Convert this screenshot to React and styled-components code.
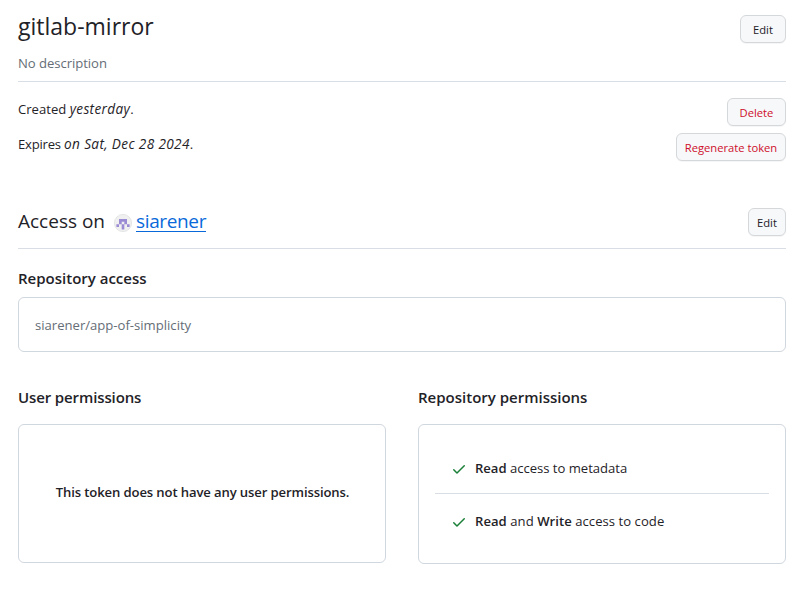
import React from 'react';
import styled, { createGlobalStyle } from 'styled-components';

const Global = createGlobalStyle`
  * { box-sizing: border-box; }
  body {
    margin: 0;
    background: #fff;
    color: #1f2328;
    font: 13.1px/21px "Open Sans", "Noto Sans", sans-serif;
  }
  h1, h2, h3, p, ul { margin: 0; padding: 0; }
`;

const Page = styled.main`
  width: 806px;
  height: 596px;
  padding: 0 20px 0 18px;
  overflow: hidden;
`;

const Header = styled.header`
  display: flex;
  justify-content: space-between;
  align-items: flex-start;
  height: 82px;
  border-bottom: 1px solid #d8dee4;
  padding-top: 8px;
`;

const Title = styled.h1`
  font-size: 23px;
  line-height: 36px;
  font-weight: 400;
`;

const Description = styled.p`
  margin-top: 9px;
  color: #656d76;
  letter-spacing: -0.05px;
`;

const Button = styled.button`
  width: ${(p) => p.$width}px;
  height: 28px;
  padding: 2px 0 0;
  border: 1px solid #d5d8da;
  border-radius: 6px;
  background: #f6f8fa;
  box-shadow: 0 1px 0 rgba(31, 35, 40, 0.04);
  color: ${(p) => (p.$danger ? '#cf0f2b' : '#1c2026')};
  font: 11.2px/20px "Open Sans", sans-serif;
  white-space: nowrap;
`;

const HeaderAction = styled.div`
  padding-top: 7px;
`;

const Details = styled.section`
  display: flex;
  justify-content: space-between;
  height: 126px;
  padding-top: 16px;
`;

const Dates = styled.div`
  display: flex;
  flex-direction: column;
  gap: 14px;
  padding-top: 1px;
`;

const DateLine = styled.p`
  height: 21px;
  letter-spacing: ${(p) => p.$spacing || 0}px;
`;

const When = styled.em`
  font-size: 13.6px;
  line-height: 1;
  letter-spacing: ${(p) => p.$spacing}px;
`;

const Actions = styled.div`
  display: flex;
  flex-direction: column;
  align-items: flex-end;
  gap: 7px;
`;

const AccessHeader = styled.div`
  display: flex;
  justify-content: space-between;
  height: 41px;
  border-bottom: 1px solid #d8dee4;
`;

const AccessTitle = styled.h2`
  display: flex;
  font-size: 19px;
  line-height: 27px;
  font-weight: 400;
`;

const Avatar = styled.svg`
  width: 18px;
  height: 18px;
  margin: 6px 4px 0 9px;
`;

const OwnerLink = styled.a`
  height: 24px;
  color: #0969da;
  letter-spacing: -0.36px;
  text-decoration: none;
  border-bottom: 1px solid #0969da;
`;

const SectionTitle = styled.h3`
  font-size: 15px;
  line-height: 24px;
  font-weight: 600;
  letter-spacing: ${(p) => p.$spacing || 0}px;
`;

const Card = styled.div`
  border: 1px solid #d0d7de;
  border-radius: 6px;
  height: ${(p) => p.$height}px;
`;

const RepositoryCard = styled(Card)`
  display: flex;
  align-items: center;
  margin-top: 7px;
  padding: 2px 16px 0;
  color: #656d76;
`;

const RepositorySection = styled.section`
  padding-top: 17px;
`;

const Permissions = styled.div`
  display: grid;
  grid-template-columns: 368px 368px;
  gap: 32px;
  padding-top: 33px;
`;

const PermissionCard = styled(Card)`
  display: flex;
  flex-direction: column;
  justify-content: center;
  margin-top: 15px;
  padding: 0 16px;
`;

const EmptyMessage = styled.p`
  padding: 0 0 2px 1px;
  font-weight: 600;
  letter-spacing: -0.12px;
  text-align: center;
  white-space: nowrap;
`;

const PermissionList = styled.ul`
  list-style: none;
`;

const PermissionItem = styled.li`
  display: flex;
  align-items: center;
  height: 53px;
  padding: 2px 0 0 16px;
  border-bottom: ${(p) => (p.$last ? 0 : '1px solid #d8dee4')};
`;

const PermissionText = styled.span`
  letter-spacing: ${(p) => p.$spacing || 0}px;
`;

const CheckIcon = styled.svg`
  width: 16px;
  height: 16px;
  margin: 1px 8px 0 0;
  fill: #1a7f37;
`;

const Strong = styled.strong`
  font-weight: 600;
`;

function Check() {
  return (
    <CheckIcon viewBox="0 0 16 16">
      <path d="M13.78 4.22a.75.75 0 0 1 0 1.06l-7.25 7.25a.75.75 0 0 1-1.06 0L2.22 9.28a.751.751 0 0 1 1.042-1.08L6 10.94l6.72-6.72a.75.75 0 0 1 1.06 0Z" />
    </CheckIcon>
  );
}

function Identicon() {
  return (
    <Avatar viewBox="0 0 18 18">
      <circle cx="9" cy="9" r="8.6" fill="#f0f0f0" stroke="#dedfe1" strokeWidth="0.8" />
      <path
        fill="#9a8bd4"
        d="M5 5h8v5.3h-2.7V7.7H7.7v2.6H5ZM2.4 10.3H5v2.6H2.4ZM13 10.3h2.6v2.6H13ZM7.7 10.3h2.6v5.2H7.7Z"
      />
    </Avatar>
  );
}

export default function App() {
  return (
    <>
      <Global />
      <Page>
        <Header>
          <div>
            <Title>gitlab-mirror</Title>
            <Description>No description</Description>
          </div>
          <HeaderAction>
            <Button $width={46}>Edit</Button>
          </HeaderAction>
        </Header>
        <Details>
          <Dates>
            <DateLine>Created <When $spacing={0.35}>yesterday</When>.</DateLine>
            <DateLine $spacing={-0.22}>Expires <When $spacing={0.36}>on Sat, Dec 28 2024</When>.</DateLine>
          </Dates>
          <Actions>
            <Button $width={59} $danger>Delete</Button>
            <Button $width={110} $danger>Regenerate token</Button>
          </Actions>
        </Details>
        <AccessHeader>
          <AccessTitle>
            Access on
            <Identicon />
            <OwnerLink>siarener</OwnerLink>
          </AccessTitle>
          <Button $width={38}>Edit</Button>
        </AccessHeader>
        <RepositorySection>
          <SectionTitle>Repository access</SectionTitle>
          <RepositoryCard $height={55}>siarener/app-of-simplicity</RepositoryCard>
        </RepositorySection>
        <Permissions>
          <section>
            <SectionTitle $spacing={-0.12}>User permissions</SectionTitle>
            <PermissionCard $height={139}>
              <EmptyMessage>This token does not have any user permissions.</EmptyMessage>
            </PermissionCard>
          </section>
          <section>
            <SectionTitle>Repository permissions</SectionTitle>
            <PermissionCard $height={140}>
              <PermissionList>
                <PermissionItem>
                  <Check />
                  <PermissionText $spacing={-0.02}><Strong>Read</Strong> access to metadata</PermissionText>
                </PermissionItem>
                <PermissionItem $last>
                  <Check />
                  <PermissionText $spacing={0.04}><Strong>Read</Strong> and <Strong>Write</Strong> access to code</PermissionText>
                </PermissionItem>
              </PermissionList>
            </PermissionCard>
          </section>
        </Permissions>
      </Page>
    </>
  );
}
